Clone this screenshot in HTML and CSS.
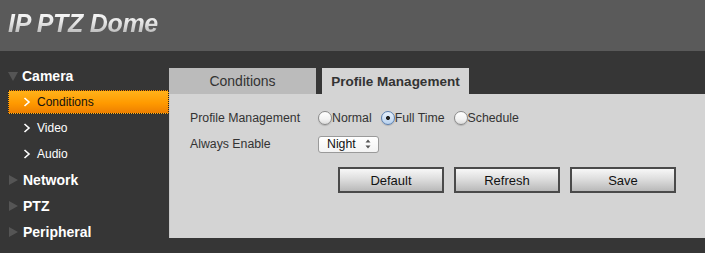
FILE: index.html
```html
<!DOCTYPE html>
<html lang="en">
<head>
  <meta charset="UTF-8">
  <title>IP PTZ Dome</title>
  <link rel="stylesheet" href="styles.css">
</head>
<body>
  <div class="top-bar">
    <span class="brand">IP PTZ Dome</span>
  </div>
  <div class="main">
    <ul class="menu">
      <li class="menu-group open"><span class="tri"></span>Camera</li>
      <li class="menu-item active"><span class="chev"><svg viewBox="0 0 8 10" width="8" height="10"><path d="M1.5 1l4.5 4-4.5 4" fill="none" stroke="#fff" stroke-width="1.6"/></svg></span>Conditions</li>
      <li class="menu-item"><span class="chev"><svg viewBox="0 0 8 10" width="8" height="10"><path d="M1.5 1l4.5 4-4.5 4" fill="none" stroke="#fff" stroke-width="1.6"/></svg></span>Video</li>
      <li class="menu-item"><span class="chev"><svg viewBox="0 0 8 10" width="8" height="10"><path d="M1.5 1l4.5 4-4.5 4" fill="none" stroke="#fff" stroke-width="1.6"/></svg></span>Audio</li>
      <li class="menu-group"><span class="tri"></span>Network</li>
      <li class="menu-group"><span class="tri"></span>PTZ</li>
      <li class="menu-group"><span class="tri"></span>Peripheral</li>
    </ul>
    <div class="panel">
      <div class="tabs">
        <div class="tab">Conditions</div>
        <div class="tab current">Profile Management</div>
      </div>
      <div class="panel-body">
        <div class="form-row">
          <span class="label">Profile Management</span>
          <label class="radio"><span class="dot"></span>Normal</label>
          <label class="radio"><span class="dot on"></span>Full Time</label>
          <label class="radio"><span class="dot"></span>Schedule</label>
        </div>
        <div class="form-row">
          <span class="label">Always Enable</span>
          <div class="select"><span>Night</span>
            <svg class="arrows" viewBox="0 0 6 10" width="6" height="10"><path d="M3 0.5l2.5 3h-5zM3 9.5l2.5-3h-5z" fill="#555"/></svg>
          </div>
        </div>
        <div class="buttons">
          <button class="btn">Default</button>
          <button class="btn">Refresh</button>
          <button class="btn">Save</button>
        </div>
      </div>
    </div>
  </div>
</body>
</html>
```

FILE: styles.css
```css
body {
  margin: 0;
  width: 705px; height: 253px;
  overflow: hidden;
  background: #363636;
  font-family: 'Liberation Sans', Arial, sans-serif;
  color: #222;
}
.top-bar {
  height: 51px;
  background: #5a5a5a;
  display: flex; align-items: center;
  padding-left: 8px;
}
.brand {
  font-size: 25px; font-weight: bold; font-style: italic;
  letter-spacing: -0.3px;
  background: linear-gradient(180deg, #ffffff 0%, #e6e6e6 45%, #a9a9a9 100%);
  -webkit-background-clip: text; background-clip: text;
  color: transparent;
  margin-top: -4px;
}
.main { display: flex; }
.menu {
  list-style: none; margin: 12px 0 0 0; padding: 0 0 0 8px;
  width: 161px;
}
.menu-group {
  height: 26px; display: flex; align-items: center;
  color: #fff; font-weight: bold; font-size: 14px;
}
.tri {
  width: 0; height: 0; margin: 0 5px 0 1px;
  border-top: 5.5px solid transparent; border-bottom: 5.5px solid transparent;
  border-left: 9px solid #555;
}
.menu-group.open .tri {
  border-left: 5.5px solid transparent; border-right: 5.5px solid transparent;
  border-top: 9px solid #555; border-bottom: 0;
  margin-right: 4px; margin-left: 0;
}
.menu-item {
  height: 26px; display: flex; align-items: center;
  color: #fff; font-size: 12px;
  padding-left: 15px;
}
.chev { width: 14px; display: flex; align-items: center; }
.menu-item.active {
  height: 24px; margin: 1px 0;
  box-sizing: border-box;
  border: 1px dotted #222;
  padding-left: 14px;
  background: linear-gradient(180deg, #ffb21a 0%, #ff9a00 55%, #ee7f00 100%);
  color: #111;
}
.panel { flex: 1; margin-top: 17px; }
.tabs { display: flex; gap: 6px; height: 26px; }
.tab {
  width: 147px; display: flex; align-items: center; justify-content: center;
  background: #bbbbbb; color: #333; font-size: 14px;
}
.tab.current { background: #d4d4d4; font-weight: bold; font-size: 13.5px; }
.panel-body {
  background: #d4d4d4; height: 144px;
  box-sizing: border-box;
  padding: 11px 0 0 20px;
  border-left: 1px solid #c8c8c8;
}
.form-row {
  height: 26px; display: flex; align-items: center;
  font-size: 12.3px; color: #333;
}
.label { width: 128px; }
.radio { display: flex; align-items: center; margin-right: 9px; }
.dot {
  width: 14px; height: 14px; border-radius: 50%;
  box-sizing: border-box;
  border: 1px solid #8a8a8a;
  background: linear-gradient(180deg, #fff 0%, #f2f2f2 60%, #dcdcdc 100%);
  box-shadow: 0 1px 1px rgba(0,0,0,0.15);
}
.dot.on {
  border-color: #5a7fb0;
  background: radial-gradient(circle, #222 0 1.7px, transparent 2.3px), linear-gradient(180deg, #e6f0fb 0%, #b9d2ee 100%);
}
.select {
  width: 61px; height: 17px; box-sizing: border-box;
  border: 1px solid #9a9a9a; border-radius: 3px;
  background: linear-gradient(180deg, #fff 0%, #f3f3f3 100%);
  display: flex; align-items: center; justify-content: space-between;
  padding: 0 7px 0 8px;
  font-size: 12.3px; color: #111;
}
.buttons {
  display: flex; gap: 10px;
  margin: 10px 0 0 148px;
}
.btn {
  width: 106px; height: 26px;
  border: 2px solid #4a4a4a;
  background: linear-gradient(180deg, #f7f7f7 0%, #dedede 45%, #b9b9b9 100%);
  font-family: 'Liberation Sans', Arial, sans-serif;
  font-size: 13px; color: #111;
  padding: 0;
}
```
